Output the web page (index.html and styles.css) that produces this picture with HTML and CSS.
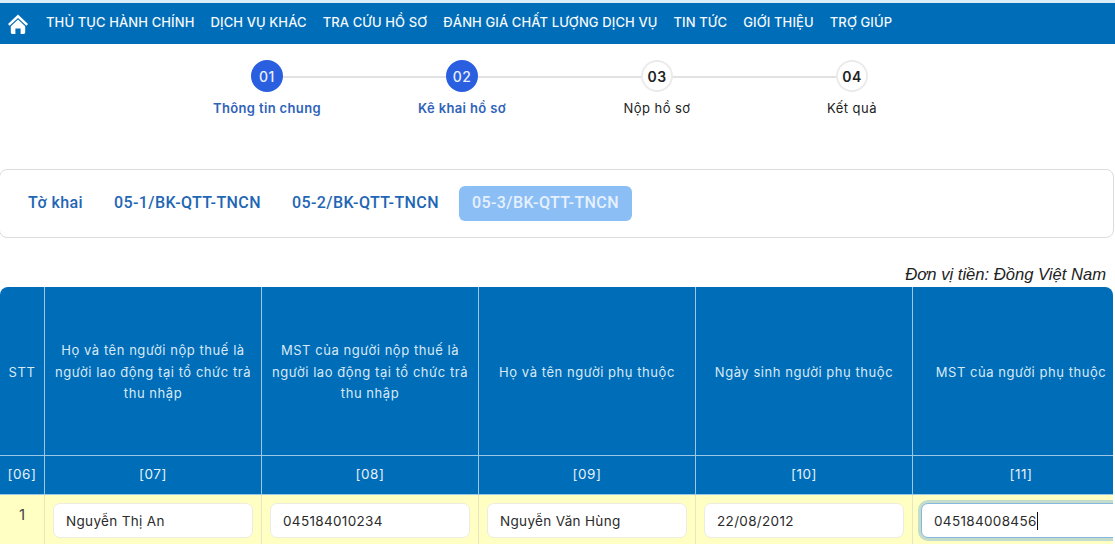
FILE: index.html
```html
<!DOCTYPE html>
<html lang="vi">
<head>
<meta charset="utf-8">
<title>Kê khai hồ sơ</title>
<link rel="stylesheet" href="styles.css">
</head>
<body>
<nav class="navbar">
  <a class="home" href="#" aria-label="Trang chủ">
    <svg viewBox="0 0 20 20" width="20" height="20"><path d="M10 0.6 L20 10 L18.4 11.7 L10 3.9 L1.6 11.7 L0 10 Z" fill="#fff"/><path d="M10 5.6 L17.2 12.2 V18.6 Q17.2 20 15.8 20 H12.6 V14.4 H7.4 V20 H4.2 Q2.8 20 2.8 18.6 V12.2 Z" fill="#fff"/></svg>
  </a>
  <a href="#">THỦ TỤC HÀNH CHÍNH</a>
  <a href="#">DỊCH VỤ KHÁC</a>
  <a href="#">TRA CỨU HỒ SƠ</a>
  <a href="#">ĐÁNH GIÁ CHẤT LƯỢNG DỊCH VỤ</a>
  <a href="#">TIN TỨC</a>
  <a href="#">GIỚI THIỆU</a>
  <a href="#">TRỢ GIÚP</a>
</nav>

<ol class="steps">
  <li class="step done"><span class="dot">01</span><span class="label">Thông tin chung</span></li>
  <li class="step done"><span class="dot">02</span><span class="label">Kê khai hồ sơ</span></li>
  <li class="step"><span class="dot">03</span><span class="label">Nộp hồ sơ</span></li>
  <li class="step"><span class="dot">04</span><span class="label">Kết quả</span></li>
</ol>

<div class="tabs">
  <a href="#" class="tab">Tờ khai</a>
  <a href="#" class="tab">05-1/BK-QTT-TNCN</a>
  <a href="#" class="tab">05-2/BK-QTT-TNCN</a>
  <a href="#" class="tab active">05-3/BK-QTT-TNCN</a>
</div>

<p class="unit">Đơn vị tiền: Đồng Việt Nam</p>

<div class="table-wrap">
  <table class="grid">
    <colgroup><col class="c-stt"><col class="c-w"><col class="c-w"><col class="c-w"><col class="c-w"><col class="c-w"></colgroup>
    <thead>
      <tr class="head">
        <th>STT</th>
        <th>Họ và tên người nộp thuế là người lao động tại tổ chức trả thu nhập</th>
        <th>MST của người nộp thuế là người lao động tại tổ chức trả thu nhập</th>
        <th>Họ và tên người phụ thuộc</th>
        <th>Ngày sinh người phụ thuộc</th>
        <th>MST của người phụ thuộc</th>
      </tr>
      <tr class="codes">
        <th>[06]</th><th>[07]</th><th>[08]</th><th>[09]</th><th>[10]</th><th>[11]</th>
      </tr>
    </thead>
    <tbody>
      <tr>
        <td class="num">1</td>
        <td><div class="field">Nguyễn Thị An</div></td>
        <td><div class="field">045184010234</div></td>
        <td><div class="field">Nguyễn Văn Hùng</div></td>
        <td><div class="field">22/08/2012</div></td>
        <td><div class="field focus">045184008456<span class="caret"></span></div></td>
      </tr>
    </tbody>
  </table>
</div>
</body>
</html>
```
FILE: styles.css
```css
* { box-sizing: border-box; }
html, body { height: 544px; overflow: hidden; }
body {
  margin: 0;
  background: #fff;
  font-family: Inter, "Noto Sans", sans-serif;
  color: #222;
}
a { text-decoration: none; }

.navbar {
  display: flex;
  align-items: center;
  height: 44px;
  border-top: 3px solid #d9eef9;
  background: #006db8;
  padding-left: 8px;
}
.navbar a {
  color: #f4f8fb;
  font-size: 13px;
  font-weight: 500;
  letter-spacing: 0.11px;
  margin-right: 16px;
  margin-bottom: 4px;
  white-space: nowrap;
}
.navbar .home { display: flex; margin-right: 18px; margin-top: 1px; margin-bottom: 0; }

.steps {
  list-style: none;
  display: flex;
  justify-content: center;
  margin: 16px 0 0;
  padding: 0;
  width: 1119px;
}
.step {
  position: relative;
  width: 195px;
  display: flex;
  flex-direction: column;
  align-items: center;
  font-size: 13px;
}
.step::before {
  content: "";
  position: absolute;
  top: 16px;
  left: 50%;
  width: 195px;
  height: 2px;
  background: #e2e2e4;
}
.step:last-child::before { display: none; }
.dot {
  position: relative;
  width: 32px;
  height: 32px;
  border-radius: 50%;
  display: flex;
  align-items: center;
  justify-content: center;
  background: #fff;
  border: 2px solid #ebebeb;
  font-size: 14px;
  font-weight: 600;
  letter-spacing: 0.5px;
  color: #222;
}
.label {
  margin-top: 8px;
  line-height: 16px;
  font-weight: 400;
  letter-spacing: 0.45px;
  color: #222;
}
.done .dot { background: #2a5fe0; border-color: #2a5fe0; color: #e9effc; font-weight: 500; }
.done .label { color: #2f63b8; font-weight: 600; letter-spacing: 0.35px; }

.tabs {
  display: flex;
  align-items: center;
  height: 69px;
  margin: 53px 1px 0 -1px;
  padding: 0 0 0 12.5px;
  border: 1px solid #dcdcdc;
  border-radius: 8px;
}
.tab {
  padding: 0 15.5px;
  height: 35px;
  line-height: 34px;
  border-radius: 6px;
  font-family: Roboto, sans-serif;
  font-size: 16px;
  font-weight: 500;
  letter-spacing: 0.4px;
  color: #1f66b4;
  white-space: nowrap;
}
.tab.active { background: #8cbef6; color: #e6f1fd; margin-left: 4.5px; padding: 0 13px; }

.unit {
  margin: 27px 9px 0 0;
  height: 22px;
  line-height: 19px;
  text-align: right;
  font-family: "Liberation Sans", Arial, sans-serif;
  font-style: italic;
  font-size: 16.6px;
  color: #222;
}

.table-wrap {
  width: 1113px;
  overflow: hidden;
  border-radius: 8px 8px 0 0;
}
.grid {
  width: 1130px;
  table-layout: fixed;
  border-collapse: separate;
  border-spacing: 0;
}
.c-stt { width: 45px; }
.c-w { width: 217px; }
.grid th {
  background: #006db8;
  color: #d8e9f6;
  font-size: 13px;
  font-weight: 400;
  letter-spacing: 0.55px;
  line-height: 21.5px;
  padding: 0 6px;
  border-right: 1px solid #9cc8e6;
  text-align: center;
}
.grid .head th { height: 169px; padding-top: 3px; border-bottom: 1px solid #9cc8e6; }
.grid .codes th { height: 39px; border-bottom: 1px solid #9cc8e6; font-size: 13.5px; color: #e6f1f9; }
.grid td {
  background: #ffffc4;
  border-right: 1px solid #e6e6c0;
  padding: 8px;
  height: 49px;
  vertical-align: top;
}
.grid td.num { text-align: center; font-size: 15px; font-weight: 400; padding-top: 10px; line-height: 20px; color: #444; }
.field {
  display: flex;
  align-items: center;
  width: 200px;
  height: 35px;
  padding: 0 12px;
  background: #fff;
  border: 1px solid #ecece0;
  border-radius: 7px;
  font-size: 13.5px;
  letter-spacing: 0.33px;
  color: #2b2b2b;
}
.field.focus {
  border-color: #86b7dc;
  box-shadow: 0 0 0 3px #c3dccb;
}
.caret {
  display: inline-block;
  width: 1px;
  height: 18px;
  background: #111;
}
```
